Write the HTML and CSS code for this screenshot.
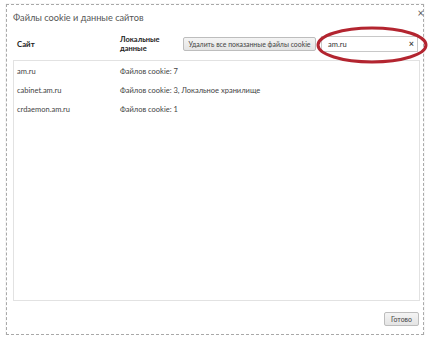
FILE: index.html
```html
<!DOCTYPE html>
<html lang="ru">
<head>
<meta charset="utf-8">
<link rel="stylesheet" href="styles.css">
</head>
<body>
<div class="dialog">
  <div class="title-bar">
    <span class="title">Файлы cookie и данные сайтов</span>
    <span class="close">×</span>
  </div>
  <div class="head-row">
    <div class="col-site">Сайт</div>
    <div class="col-data">Локальные<br>данные</div>
    <button class="btn remove-all">Удалить все показанные файлы cookie</button>
    <div class="search">
      <span class="search-text">am.ru</span>
      <span class="search-clear">×</span>
    </div>
  </div>
  <div class="list">
    <div class="row"><div class="col-site">am.ru</div><div class="col-val">Файлов cookie: 7</div></div>
    <div class="row"><div class="col-site">cabinet.am.ru</div><div class="col-val">Файлов cookie: 3, Локальное хранилище</div></div>
    <div class="row"><div class="col-site">crdaemon.am.ru</div><div class="col-val">Файлов cookie: 1</div></div>
  </div>
  <div class="footer">
    <button class="btn done">Готово</button>
  </div>
  <svg class="marker" width="116" height="40" viewBox="0 0 116 40">
    <ellipse cx="58" cy="20" rx="54" ry="17" fill="none" stroke="#b32530" stroke-width="3"/>
  </svg>
</div>
</body>
</html>
```
FILE: styles.css
```css
html, body {
  margin: 0;
  padding: 0;
  background: #ffffff;
}
body {
  font-family: Lato, "Open Sans", sans-serif;
  color: #333;
  font-size: 7.5px;
}
.dialog {
  position: relative;
  margin: 4px 0 0 6px;
  width: 418px;
  height: 331px;
  border: 1px dashed #a9a9a9;
  box-shadow: 0 0 1px #ccc;
  display: flex;
  flex-direction: column;
  box-sizing: border-box;
  padding: 0 3px 0 6px;
  background: #fff;
}
.title-bar {
  height: 26px;
  display: flex;
  align-items: flex-start;
  justify-content: space-between;
  padding-top: 7px;
  box-sizing: border-box;
}
.title {
  font-size: 9.2px;
  color: #555;
}
.close {
  font-size: 11px;
  color: #555;
  line-height: 8px;
  margin-right: -4px;
  margin-top: -3px;
}
.head-row {
  display: flex;
  align-items: center;
  height: 26px;
  padding-left: 4px;
}
.head-row .col-site {
  width: 103px;
  font-weight: bold;
  color: #222;
  font-size: 7.8px;
}
.col-data {
  width: 63px;
  font-weight: bold;
  color: #222;
  font-size: 7.5px;
  line-height: 9px;
}
.btn {
  font-family: Lato, "Open Sans", sans-serif;
  font-size: 6.9px;
  color: #444;
  background: linear-gradient(#f4f4f4, #e4e4e4);
  border: 1px solid #bdbdbd;
  border-radius: 2px;
  padding: 0 4px;
  margin: 0;
}
.remove-all {
  height: 14px;
  width: 133px;
  white-space: nowrap;
  overflow: hidden;
}
.search {
  margin-left: 5px;
  width: 97px;
  height: 16px;
  box-sizing: border-box;
  border: 1px solid #c8c8c8;
  display: flex;
  align-items: center;
  justify-content: space-between;
  padding: 0 3px 0 6px;
}
.search-text {
  font-size: 7.5px;
  color: #333;
}
.search-clear {
  font-size: 9px;
  font-weight: bold;
  color: #444;
  line-height: 8px;
}
.list {
  margin-top: 3px;
  border: 1px solid #e2e2e2;
  height: 241px;
  box-sizing: border-box;
  padding-top: 1px;
}
.row {
  display: flex;
  height: 19px;
  align-items: center;
  padding-left: 3px;
}
.row .col-site {
  width: 103px;
  color: #444;
}
.col-val {
  color: #444;
}
.footer {
  display: flex;
  justify-content: flex-end;
  padding-top: 11px;
}
.done {
  height: 14px;
  width: 35px;
  padding: 0;
  margin-right: 1px;
}
.marker {
  position: absolute;
  left: 307px;
  top: 20px;
}
```
